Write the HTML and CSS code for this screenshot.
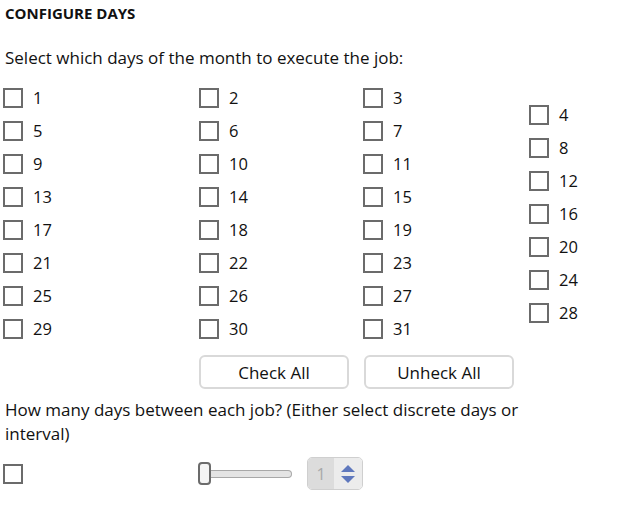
FILE: index.html
```html
<!DOCTYPE html>
<html lang="en">
<head>
    <meta charset="UTF-8">
    <meta name="viewport" content="width=device-width, initial-scale=1.0">
    <title>Configure Days</title>
    <link rel="stylesheet" href="styles.css">
</head>
<body>
    <div class="panel">
        <h1 class="title">CONFIGURE DAYS</h1>
        <p class="prompt">Select which days of the month to execute the job:</p>

        <!-- Day grid -->
        <div class="days">
            <div class="col">
                <label class="day"><input type="checkbox"><span>1</span></label>
                <label class="day"><input type="checkbox"><span>5</span></label>
                <label class="day"><input type="checkbox"><span>9</span></label>
                <label class="day"><input type="checkbox"><span>13</span></label>
                <label class="day"><input type="checkbox"><span>17</span></label>
                <label class="day"><input type="checkbox"><span>21</span></label>
                <label class="day"><input type="checkbox"><span>25</span></label>
                <label class="day"><input type="checkbox"><span>29</span></label>
            </div>
            <div class="col">
                <label class="day"><input type="checkbox"><span>2</span></label>
                <label class="day"><input type="checkbox"><span>6</span></label>
                <label class="day"><input type="checkbox"><span>10</span></label>
                <label class="day"><input type="checkbox"><span>14</span></label>
                <label class="day"><input type="checkbox"><span>18</span></label>
                <label class="day"><input type="checkbox"><span>22</span></label>
                <label class="day"><input type="checkbox"><span>26</span></label>
                <label class="day"><input type="checkbox"><span>30</span></label>
            </div>
            <div class="col">
                <label class="day"><input type="checkbox"><span>3</span></label>
                <label class="day"><input type="checkbox"><span>7</span></label>
                <label class="day"><input type="checkbox"><span>11</span></label>
                <label class="day"><input type="checkbox"><span>15</span></label>
                <label class="day"><input type="checkbox"><span>19</span></label>
                <label class="day"><input type="checkbox"><span>23</span></label>
                <label class="day"><input type="checkbox"><span>27</span></label>
                <label class="day"><input type="checkbox"><span>31</span></label>
            </div>
            <div class="col col-last">
                <label class="day"><input type="checkbox"><span>4</span></label>
                <label class="day"><input type="checkbox"><span>8</span></label>
                <label class="day"><input type="checkbox"><span>12</span></label>
                <label class="day"><input type="checkbox"><span>16</span></label>
                <label class="day"><input type="checkbox"><span>20</span></label>
                <label class="day"><input type="checkbox"><span>24</span></label>
                <label class="day"><input type="checkbox"><span>28</span></label>
            </div>
        </div>

        <div class="actions">
            <button class="action-button">Check All</button>
            <button class="action-button">Unheck All</button>
        </div>

        <p class="prompt prompt-wrap">How many days between each job? (Either select discrete days or interval)</p>

        <!-- Interval row -->
        <div class="interval">
            <input type="checkbox" class="interval-check">
            <div class="slider">
                <div class="slider-thumb"></div>
                <div class="slider-track"></div>
            </div>
            <div class="spinner">
                <div class="spinner-value">1</div>
                <div class="spinner-arrows">
                    <svg width="14" height="8" viewBox="0 0 14 8"><path d="M0 8 L7 1 L14 8 Z" fill="#5f78bd"/></svg>
                    <svg width="14" height="8" viewBox="0 0 14 8"><path d="M0 0 L7 7 L14 0 Z" fill="#5f78bd"/></svg>
                </div>
            </div>
        </div>
    </div>
</body>
</html>
```

FILE: styles.css
```css
/* Page */
body {
    margin: 0;
    font-family: "Open Sans", "Noto Sans", sans-serif;
    color: #111;
    background: #fff;
}
.panel {
    padding: 4px 0 0 3px;
}
.title {
    font-size: 15px;
    font-weight: bold;
    margin: 0 0 0 2px;
    line-height: 18px;
}
.prompt {
    font-size: 17px;
    margin: 24px 0 0 2px;
    line-height: 23px;
}
.prompt-wrap {
    width: 540px;
    margin-top: 9px;
    line-height: 24px;
}
/* Day grid */
.days {
    display: grid;
    grid-template-columns: 196px 164px 166px auto;
    margin-top: 12px;
}
.col-last {
    padding-top: 17px;
}
.day {
    display: flex;
    align-items: center;
    height: 33px;
    font-size: 16.5px;
}
.day input,
.interval-check {
    appearance: none;
    -webkit-appearance: none;
    width: 20px;
    height: 20px;
    margin: 0;
    border: 2px solid #6b6b6b;
    background: #fff;
}
.day span {
    margin-left: 10px;
}
/* Buttons */
.actions {
    display: flex;
    gap: 15px;
    margin: 10px 0 0 196px;
}
.action-button {
    width: 150px;
    height: 34px;
    background: #fff;
    border: 2px solid #d9d9d9;
    border-radius: 6px;
    font-family: inherit;
    font-size: 17px;
    color: #111;
}
/* Interval row */
.interval {
    display: flex;
    align-items: center;
    margin-top: 11px;
}
.slider {
    display: flex;
    align-items: center;
    margin-left: 175px;
    width: 94px;
}
.slider-thumb {
    width: 9px;
    height: 19px;
    border: 2px solid #6b6b6b;
    border-radius: 4px;
    background: #f4f4f4;
}
.slider-track {
    flex: 1;
    height: 6px;
    border: 1px solid #a8a8a8;
    border-left: none;
    border-radius: 0 4px 4px 0;
    background: #e4e4e4;
}
.spinner {
    display: flex;
    margin-left: 15px;
    width: 54px;
    height: 31px;
    border: 1px solid #cfcfcf;
    border-radius: 5px;
    overflow: hidden;
}
.spinner-value {
    width: 26px;
    background: #dcdcdc;
    color: #a9a9a9;
    font-size: 16px;
    display: flex;
    align-items: center;
    justify-content: center;
}
.spinner-arrows {
    flex: 1;
    background: #ececec;
    display: flex;
    flex-direction: column;
    align-items: center;
    justify-content: center;
    gap: 4px;
}
```
